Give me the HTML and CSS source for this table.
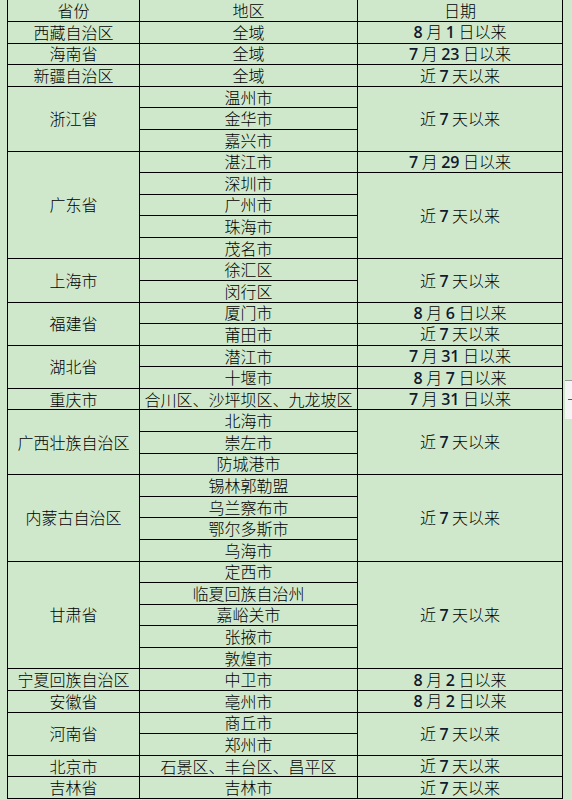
FILE: index.html
```html
<!DOCTYPE html>
<html lang="zh-CN">
<head>
<meta charset="utf-8">
<title>地区列表</title>
<link rel="stylesheet" href="styles.css">
</head>
<body>
<table class="sheet">
  <colgroup><col class="c1"><col class="c2"><col class="c3"></colgroup>
  <tr class="head"><td>省份</td><td>地区</td><td>日期</td></tr>
  <tr><td>西藏自治区</td><td>全域</td><td><span class="n">8</span> 月 <span class="n">1</span> 日以来</td></tr>
  <tr><td>海南省</td><td>全域</td><td><span class="n">7</span> 月 <span class="n">23</span> 日以来</td></tr>
  <tr><td>新疆自治区</td><td>全域</td><td>近 <span class="n">7</span> 天以来</td></tr>
  <tr><td rowspan="3">浙江省</td><td>温州市</td><td rowspan="3">近 <span class="n">7</span> 天以来</td></tr>
  <tr><td>金华市</td></tr>
  <tr><td>嘉兴市</td></tr>
  <tr><td rowspan="5">广东省</td><td>湛江市</td><td><span class="n">7</span> 月 <span class="n">29</span> 日以来</td></tr>
  <tr><td>深圳市</td><td rowspan="4">近 <span class="n">7</span> 天以来</td></tr>
  <tr><td>广州市</td></tr>
  <tr><td>珠海市</td></tr>
  <tr><td>茂名市</td></tr>
  <tr><td rowspan="2">上海市</td><td>徐汇区</td><td rowspan="2">近 <span class="n">7</span> 天以来</td></tr>
  <tr><td>闵行区</td></tr>
  <tr><td rowspan="2">福建省</td><td>厦门市</td><td><span class="n">8</span> 月 <span class="n">6</span> 日以来</td></tr>
  <tr><td>莆田市</td><td>近 <span class="n">7</span> 天以来</td></tr>
  <tr><td rowspan="2">湖北省</td><td>潜江市</td><td><span class="n">7</span> 月 <span class="n">31</span> 日以来</td></tr>
  <tr><td>十堰市</td><td><span class="n">8</span> 月 <span class="n">7</span> 日以来</td></tr>
  <tr><td>重庆市</td><td>合川区、沙坪坝区、九龙坡区</td><td><span class="n">7</span> 月 <span class="n">31</span> 日以来</td></tr>
  <tr><td rowspan="3">广西壮族自治区</td><td>北海市</td><td rowspan="3">近 <span class="n">7</span> 天以来</td></tr>
  <tr><td>崇左市</td></tr>
  <tr><td>防城港市</td></tr>
  <tr><td rowspan="4">内蒙古自治区</td><td>锡林郭勒盟</td><td rowspan="4">近 <span class="n">7</span> 天以来</td></tr>
  <tr><td>乌兰察布市</td></tr>
  <tr><td>鄂尔多斯市</td></tr>
  <tr><td>乌海市</td></tr>
  <tr><td rowspan="5">甘肃省</td><td>定西市</td><td rowspan="5">近 <span class="n">7</span> 天以来</td></tr>
  <tr><td>临夏回族自治州</td></tr>
  <tr><td>嘉峪关市</td></tr>
  <tr><td>张掖市</td></tr>
  <tr><td>敦煌市</td></tr>
  <tr><td>宁夏回族自治区</td><td>中卫市</td><td><span class="n">8</span> 月 <span class="n">2</span> 日以来</td></tr>
  <tr><td>安徽省</td><td>亳州市</td><td><span class="n">8</span> 月 <span class="n">2</span> 日以来</td></tr>
  <tr><td rowspan="2">河南省</td><td>商丘市</td><td rowspan="2">近 <span class="n">7</span> 天以来</td></tr>
  <tr><td>郑州市</td></tr>
  <tr><td>北京市</td><td>石景区、丰台区、昌平区</td><td>近 <span class="n">7</span> 天以来</td></tr>
  <tr><td>吉林省</td><td>吉林市</td><td>近 <span class="n">7</span> 天以来</td></tr>
</table>
<div class="side-tab"><span class="side-dash"></span></div>
</body>
</html>
```
FILE: styles.css
```css
html, body {
  margin: 0;
  padding: 0;
  background: #cfe8cc;
}
body {
  position: relative;
  width: 572px;
  height: 800px;
  overflow: hidden;
  font-family: "Noto Sans CJK SC", "Noto Sans", sans-serif;
  font-size: 16px;
  color: #000;
}
.sheet {
  margin: 0 0 0 7px;
  border-collapse: collapse;
  table-layout: fixed;
  width: 556px;
}
.c1 { width: 132px; }
.c2 { width: 218px; }
.c3 { width: 205px; }
.sheet tr {
  height: 21.58px;
}
.sheet td {
  border: 1px solid #000;
  padding: 0;
  text-align: center;
  vertical-align: middle;
  line-height: 19px;
  white-space: nowrap;
  font-weight: 300;
}
.sheet .head td {
  border-top: 0;
}
.n {
  font-family: "Open Sans", "Liberation Sans", sans-serif;
  font-weight: 600;
  color: #111a2e;
}
.side-tab {
  position: absolute;
  left: 565px;
  top: 380px;
  width: 7px;
  height: 38px;
  background: #f4f4f4;
  border-top: 1px solid #9a9a9a;
}
.side-dash {
  position: absolute;
  left: 3px;
  top: 18px;
  width: 4px;
  height: 1px;
  background: #555;
}
```
